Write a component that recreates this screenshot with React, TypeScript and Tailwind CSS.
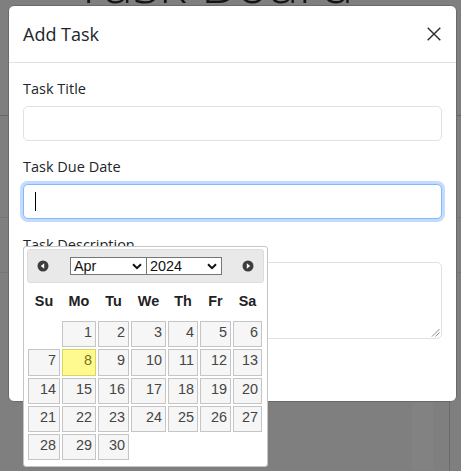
import React from "react";

const rows: (number | null)[][] = [
  [null, 1, 2, 3, 4, 5, 6],
  [7, 8, 9, 10, 11, 12, 13],
  [14, 15, 16, 17, 18, 19, 20],
  [21, 22, 23, 24, 25, 26, 27],
  [28, 29, 30, null, null, null, null],
];
const rowHeights = ["h-[28px]", "h-[29px]", "h-[28px]", "h-[28px]", "h-[28px]"];
const days = ["Su", "Mo", "Tu", "We", "Th", "Fr", "Sa"];

function Chevron() {
  return (
    <svg width="10" height="7" viewBox="0 0 10 7" className="shrink-0">
      <path d="M1 1.2 L5 5.2 L9 1.2" fill="none" stroke="#111" strokeWidth="2" />
    </svg>
  );
}

function NavIcon({ dir }: { dir: "prev" | "next" }) {
  return (
    <svg width="12" height="12" viewBox="0 0 12 12" className="shrink-0">
      <circle cx="6" cy="6" r="5.5" fill="#3d3d3d" />
      {dir === "prev" ? (
        <polygon points="7.2,3.2 3.8,6 7.2,8.8" fill="#fff" />
      ) : (
        <polygon points="4.8,3.2 8.2,6 4.8,8.8" fill="#fff" />
      )}
    </svg>
  );
}

export default function App() {
  return (
    <div className="relative w-[461px] h-[471px] overflow-hidden bg-[#7f7f7f] font-['Open_Sans',sans-serif]">
      {/* background page under the backdrop */}
      <div className="absolute left-[74px] top-[-47px] whitespace-nowrap text-[56px] leading-[56px] font-light text-[#151515]">
        Task Board
      </div>
      <div className="absolute left-0 top-[115px] w-[461px] h-px bg-[#666666]" />
      <div className="absolute left-0 top-[217px] w-[461px] h-px bg-[#767676]" />
      <div className="absolute left-0 top-[272px] w-[461px] h-px bg-[#767676]" />
      <div className="absolute left-[412px] top-[300px] w-[21px] h-[171px] bg-[#828282]" />
      <div className="absolute left-[449px] top-[300px] w-px h-[171px] bg-[#6a6a6a]" />

      {/* modal */}
      <div className="absolute left-[8px] top-[5px] w-[449px] h-[397px] bg-white rounded-[6px] border border-[#6a6a6a] flex flex-col">
        <div className="h-[57px] shrink-0 border-b border-[#dee2e6] flex items-center justify-between pl-[14px] pr-[14px]">
          <div className="text-[18px] leading-[28px] text-[#212529]">Add Task</div>
          <svg width="14" height="14" viewBox="0 0 14 14" className="mr-px">
            <path d="M0.7 0.7 L13.3 13.3 M13.3 0.7 L0.7 13.3" stroke="#2b2b2b" strokeWidth="1.4" />
          </svg>
        </div>
        <div className="pt-[14px] px-[14px]">
          <div className="mb-[14px]">
            <div className="h-[24px] leading-[24px] mb-[5px] text-[14.5px] text-[#212529]">Task Title</div>
            <div className="h-[35px] rounded-[5px] border border-[#dee2e6] bg-white" />
          </div>
          <div className="mb-[14px]">
            <div className="h-[24px] leading-[24px] mb-[5px] text-[14.5px] text-[#212529]">Task Due Date</div>
            <div className="h-[35px] rounded-[5px] border border-[#86b7fe] bg-white shadow-[0_0_0_3px_rgba(13,110,253,0.25)] flex items-center pl-[11px]">
              <div className="w-px h-[19px] bg-black" />
            </div>
          </div>
          <div>
            <div className="h-[24px] leading-[24px] mb-[5px] text-[14.5px] text-[#212529]">Task Description</div>
            <div className="relative h-[77px] rounded-[5px] border border-[#dee2e6] bg-white">
              <svg width="9" height="9" viewBox="0 0 9 9" className="absolute right-[1px] bottom-[1px]">
                <path d="M8.5 1 L1 8.5 M8.5 4.5 L4.5 8.5" stroke="#8a8a8a" strokeWidth="1" />
              </svg>
            </div>
          </div>
        </div>
      </div>

      {/* datepicker popup */}
      <div className="absolute left-[23px] top-[246px] w-[245px] bg-white border border-[#c5c5c5] rounded-[3px] pt-[2px] px-[3px] pb-[5px] font-['Liberation_Sans',Arial,sans-serif] text-[14.4px] text-[#454545]">
        <div className="h-[34px] bg-[#e9e9e9] border border-[#dddddd] rounded-[3px] flex items-center">
          <div className="ml-[9px]">
            <NavIcon dir="prev" />
          </div>
          <div className="ml-[21px] w-[77px] h-[18px] border border-[#767676] bg-white flex items-center justify-between pl-[3px] pr-[4px] text-[#111] leading-none">
            <span>Apr</span>
            <Chevron />
          </div>
          <div className="-ml-px w-[76px] h-[18px] border border-[#767676] bg-white flex items-center justify-between pl-[3px] pr-[4px] text-[#111] leading-none">
            <span>2024</span>
            <Chevron />
          </div>
          <div className="ml-[20px]">
            <NavIcon dir="next" />
          </div>
        </div>
        <div className="grid grid-cols-[34px_36px_33px_37px_32px_33px_31px]">
          {days.map((d) => (
            <div key={d} className="h-[37px] flex items-center justify-center font-bold text-[#222]">
              {d}
            </div>
          ))}
          {rows.map((r, ri) =>
            r.map((n, ci) => (
              <div key={`${ri}-${ci}`} className={`${rowHeights[ri]} p-px`}>
                {n !== null && (
                  <div
                    className={
                      n === 8
                        ? "h-full border border-[#dad55e] bg-[#fffa90] text-[#777620] text-right pr-[3px] pt-[2px] leading-[17px]"
                        : "h-full border border-[#c5c5c5] bg-[#f6f6f6] text-[#454545] text-right pr-[3px] pt-[2px] leading-[17px]"
                    }
                  >
                    {n}
                  </div>
                )}
              </div>
            ))
          )}
        </div>
      </div>
    </div>
  );
}
